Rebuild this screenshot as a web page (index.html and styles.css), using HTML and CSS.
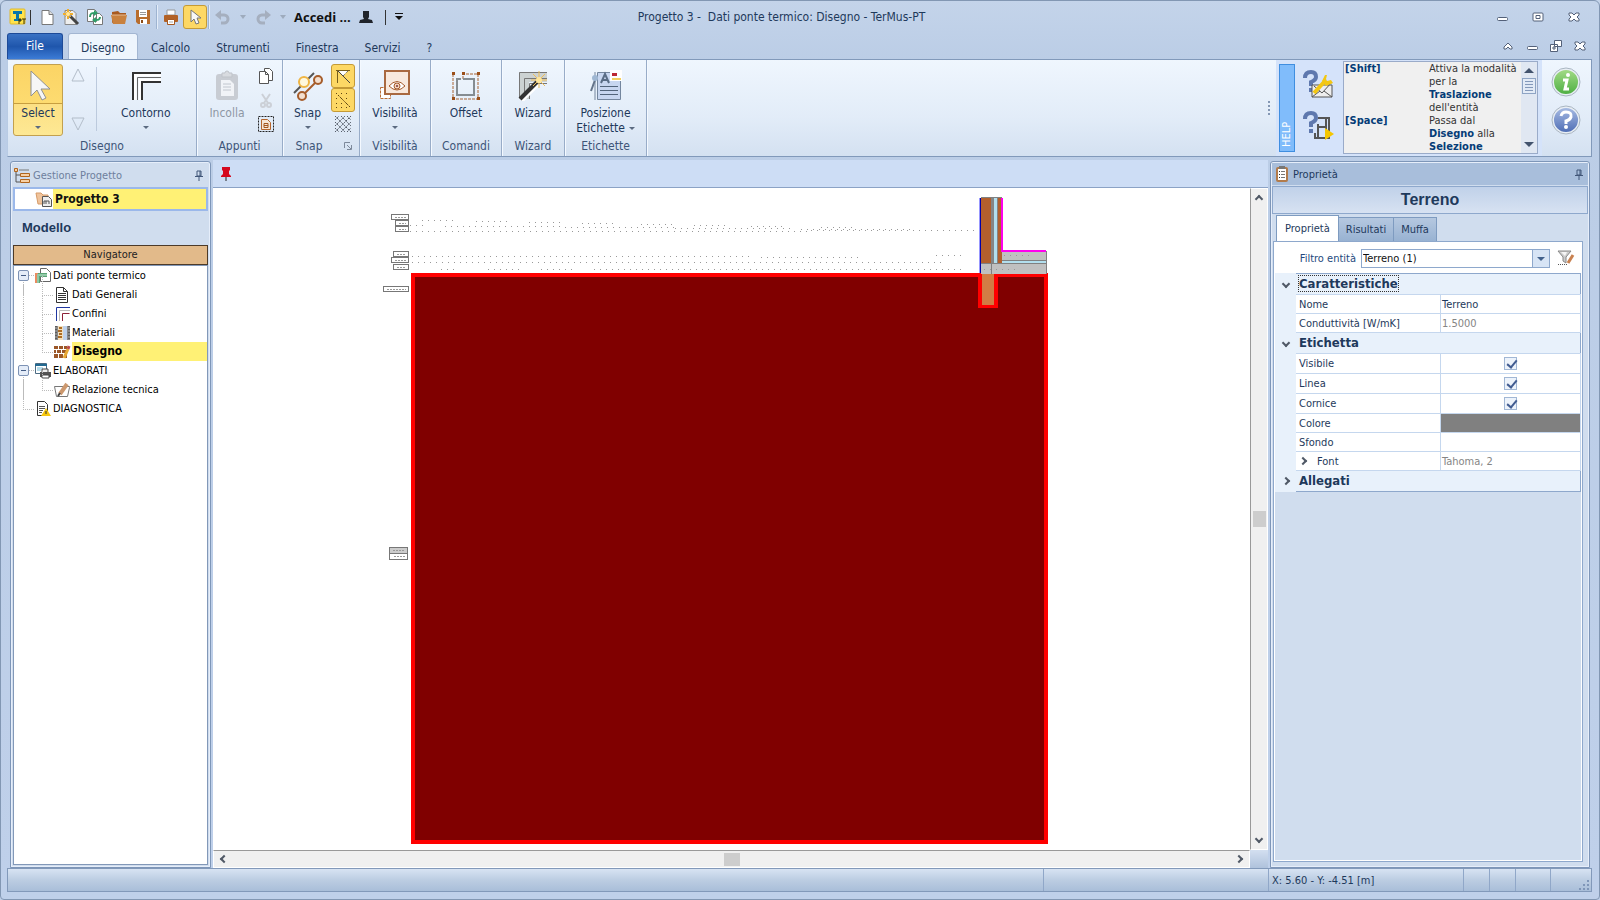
FILE: index.html
```html
<!DOCTYPE html>
<html lang="it">
<head>
  <meta charset="UTF-8">
  <meta name="viewport" content="width=device-width, initial-scale=1.0">
  <title>TerMus-PT</title>
  <link rel="stylesheet" href="styles.css">
</head>
<body>
  <header class="titlebar">
    <div class="quick">
      <svg class="logo" width="18" height="18" viewBox="0 0 18 18"><rect x="1" y="1" width="15" height="15" rx="1" fill="#ffe34d" stroke="#e0b92c"/><path d="M4 3h9v3h-3v5h2v2H5v-2h2V6H4z" fill="#0877a8"/><path d="M10 16v-5h2v2h-2M13 11h4M15 11v5" stroke="#3b3000" fill="none"/></svg>
      <span class="bar"></span>
      <button class="tool" aria-label="Nuovo"><svg width="18" height="18" viewBox="0 0 18 18"><path d="M4 2.500h7l4 4v10H4z" fill="#fff" stroke="#777"/><path d="M11 2.500v4h4" fill="#ddd" stroke="#777"/></svg></button>
      <button class="tool" aria-label="Wizard"><svg width="18" height="18" viewBox="0 0 18 18"><path d="M3 2.500h8l3 3v11H3z" fill="#eee" stroke="#888"/><path d="M8 8l8 8" stroke="#444" stroke-width="3"/><path d="M6 1v10M1 6h10" stroke="#f0ae2d" stroke-width="2"/><path d="M3 3l6 6M9 3L3 9" stroke="#f0ae2d"/><circle cx="6" cy="6" r="2" fill="#ffe9a0"/></svg></button>
      <button class="tool" aria-label="Duplica"><svg width="18" height="18" viewBox="0 0 18 18"><path d="M1.500 1.500h7l2 2v10h-9zM7.500 5.500h6l3 3v8h-9z" fill="#fff" stroke="#777"/><path d="M4 9c0-4 2-4 5-4" stroke="#2f9d69" stroke-width="2" fill="none"/><path d="M8 2l4 3-4 3z" fill="#2f9d69"/><path d="M14 9c0 3-2 3-5 3" stroke="#2f9d69" stroke-width="2" fill="none"/><path d="M10 9l-4 3 4 3z" fill="#2f9d69"/></svg></button>
      <button class="tool" aria-label="Apri"><svg width="18" height="18" viewBox="0 0 18 18"><path d="M2 15V4l6-1 2 2h6v3" fill="#a85a20"/><path d="M1 7h16l-2 9H3z" fill="#c9813e"/><path d="M2 7h14" stroke="#e5ba92"/></svg></button>
      <button class="tool" aria-label="Salva"><svg width="18" height="18" viewBox="0 0 18 18"><path d="M2 2h14v14H4l-2-2z" fill="#b86d2d"/><path d="M5 2h8v7H5zM6 11h7v5H6z" fill="#fff"/><path d="M6 4.500h6M6 6.500h6" stroke="#999"/><path d="M7 12h2v3H7z" fill="#8d4d19"/></svg></button>
      <span class="split"></span>
      <button class="tool" aria-label="Stampa"><svg width="18" height="18" viewBox="0 0 18 18"><path d="M5 2h8v5H5z" fill="#fff" stroke="#999"/><rect x="2" y="7" width="14" height="7" rx="1" fill="#b26125"/><path d="M5.500 11.500h7v5h-7z" fill="#fff" stroke="#a75a22"/><path d="M7 14h4" stroke="#aaa"/></svg></button>
      <button class="tool on" aria-label="Seleziona"><svg width="18" height="18" viewBox="0 0 18 18"><path d="M5 2v12l3-3 2 5 3-1-2-5h4z" fill="#f8f8f8" stroke="#777"/></svg></button>
      <span class="split"></span>
      <button class="tool" aria-label="Annulla"><svg width="18" height="18" viewBox="0 0 18 18"><path d="M4 7h6a4 4 0 010 8H7" fill="none" stroke="#a5afbf" stroke-width="3"/><path d="M7 2L1 7l6 5z" fill="#a5afbf"/></svg></button>
      <span class="mini"></span>
      <button class="tool" aria-label="Ripeti"><svg width="18" height="18" viewBox="0 0 18 18"><path d="M14 7H8a4 4 0 000 8h3" fill="none" stroke="#a5afbf" stroke-width="3"/><path d="M11 2l6 5-6 5z" fill="#a5afbf"/></svg></button>
      <span class="mini"></span>
      <button class="login">Accedi ...</button>
      <svg width="16" height="16" viewBox="0 0 16 16"><path d="M5 2h6v6l-1 2 4 1 1 3H1l1-3 4-1-1-2z" fill="#20242b"/></svg>
      <span class="bar"></span>
      <svg width="10" height="10" viewBox="0 0 10 10"><path d="M1 1.500h8" stroke="#111" stroke-width="1"/><path d="M1 4h8L5 8z" fill="#111"/></svg>
    </div>
    <div class="title">Progetto 3 -&nbsp; Dati ponte termico: Disegno - TerMus-PT</div>
    <div class="winbuttons">
      <button aria-label="Riduci"><svg width="12" height="12" viewBox="0 0 12 12"><rect x="1.500" y="6.500" width="10" height="3" rx="1" fill="#fff" stroke="#536079"/></svg></button>
      <button aria-label="Ingrandisci"><svg width="12" height="12" viewBox="0 0 12 12"><rect x="1" y="2" width="10" height="8" rx="1" fill="#fff" stroke="#536079"/><path d="M4 4.500h4v3H4z" fill="#fff" stroke="#536079"/></svg></button>
      <button aria-label="Chiudi"><svg width="12" height="12" viewBox="0 0 12 12"><path d="M1 2h3l2 2 2-2h3v2L9 6l2 2v2H8L6 8l-2 2H1V8l2-2-2-2z" fill="#fff" stroke="#536079"/></svg></button>
    </div>
  </header>

  <nav class="tabs">
    <button class="file">File</button>
    <a class="tab active" href="#">Disegno</a>
    <a class="tab" href="#">Calcolo</a>
    <a class="tab" href="#">Strumenti</a>
    <a class="tab" href="#">Finestra</a>
    <a class="tab" href="#">Servizi</a>
    <a class="tab" href="#">?</a>
    <div class="docbuttons">
      <button aria-label="Comprimi"><svg width="12" height="12" viewBox="0 0 12 12"><path d="M2 7l4-4 4 4v2H8L6 7 4 9H2z" fill="#fff" stroke="#536079"/></svg></button>
      <button aria-label="Riduci scheda"><svg width="12" height="12" viewBox="0 0 12 12"><rect x="1.500" y="6.500" width="10" height="3" rx="1" fill="#fff" stroke="#536079"/></svg></button>
      <button aria-label="Ripristina scheda"><svg width="12" height="12" viewBox="0 0 12 12"><path d="M4.500.5h7v6h-7zM.5 4.500h7v7h-7z" fill="#fff" stroke="#536079"/><path d="M3 7h2v2H3z" fill="none" stroke="#536079"/></svg></button>
      <button aria-label="Chiudi scheda"><svg width="12" height="12" viewBox="0 0 12 12"><path d="M1 2h3l2 2 2-2h3v2L9 6l2 2v2H8L6 8l-2 2H1V8l2-2-2-2z" fill="#fff" stroke="#536079"/></svg></button>
    </div>
  </nav>

  <section class="ribbon">
    <div class="group g-disegno">
      <div class="tools">
        <button class="big selected">
          <svg width="32" height="32" viewBox="0 0 32 32"><path d="M9 2v25l6-6 5 10 4-2-5-9h9z" fill="#f6f6f6" stroke="#909090"/></svg>
          <span class="cap">Select</span><i class="arrow"></i>
        </button>
        <div class="updown">
          <svg width="14" height="14" viewBox="0 0 14 14"><path d="M7 1l6 12H1z" fill="none" stroke="#b2bdc9"/></svg>
          <svg width="14" height="14" viewBox="0 0 14 14"><path d="M7 13L1 1h12z" fill="none" stroke="#b2bdc9"/></svg>
        </div>
        <span class="line"></span>
        <button class="big contorno">
          <svg width="32" height="32" viewBox="0 0 32 32"><path d="M5 31V6h26M10 31V11h21" fill="none" stroke="#fff" stroke-width="3"/><path d="M3 31V4h28" fill="none" stroke="#333" stroke-width="2"/><path d="M7.500 31V8.500H31" fill="none" stroke="#666"/><path d="M12 31V13h19" fill="none" stroke="#333" stroke-width="2"/></svg>
          <span class="cap">Contorno</span><i class="arrow"></i>
        </button>
      </div>
      <div class="name">Disegno</div>
    </div>
    <div class="group g-appunti">
      <div class="tools">
        <button class="big off">
          <svg width="32" height="32" viewBox="0 0 32 32"><rect x="5" y="5" width="22" height="26" rx="3" fill="#c8ccd3"/><path d="M11 8V4h3a2 2 0 014 0h3v4z" fill="#d8dbe0" stroke="#bfc3ca"/><path d="M10 11h9l4 4v12H10z" fill="#f1f3f7"/><path d="M12 15h8M12 18h8M12 21h8" stroke="#c1c6ce"/></svg>
          <span class="cap">Incolla</span>
        </button>
        <div class="stack">
          <button aria-label="Copia"><svg width="18" height="18" viewBox="0 0 18 18"><path d="M7.500 1.500h5l3 3v9h-8z" fill="#fff" stroke="#555"/><path d="M2.500 4.500h6l3 3v9h-9z" fill="#fff" stroke="#555"/><path d="M8.500 4.500v3h3" fill="none" stroke="#555"/></svg></button>
          <button aria-label="Taglia"><svg width="18" height="18" viewBox="0 0 18 18"><path d="M5 3l6 9M13 3l-6 9" stroke="#ccd0d7" stroke-width="2"/><circle cx="6" cy="14" r="2" fill="none" stroke="#ccd0d7" stroke-width="2"/><circle cx="12" cy="14" r="2" fill="none" stroke="#ccd0d7" stroke-width="2"/></svg></button>
          <button aria-label="Seleziona tutto"><svg width="18" height="18" viewBox="0 0 18 18"><rect x="1.500" y="1.500" width="15" height="15" fill="none" stroke="#222" stroke-dasharray="2 1"/><path d="M4.500 4.500h6l3 3v7h-9z" fill="#f7e5d5" stroke="#b5652c"/><path d="M7 8.500h4v4H7zM7 10.500h4" stroke="#a4561e" fill="none"/></svg></button>
        </div>
      </div>
      <div class="name">Appunti</div>
    </div>
    <div class="group g-snap">
      <div class="tools">
        <button class="big">
          <svg width="32" height="32" viewBox="0 0 32 32"><path d="M2 24L22 4" stroke="#555" stroke-width="2"/><path d="M10 27L26 11" stroke="#a65d2b" stroke-width="2"/><circle cx="12" cy="13" r="5" fill="#fff8dd" stroke="#efb544" stroke-width="2"/><circle cx="26" cy="11" r="4" fill="#f4dfce" stroke="#a65d2b" stroke-width="2"/><circle cx="10" cy="27" r="4" fill="#f4dfce" stroke="#a65d2b" stroke-width="2"/></svg>
          <span class="cap">Snap</span><i class="arrow"></i>
        </button>
        <div class="stack snaps">
          <button class="on" aria-label="Snap angolo"><svg width="18" height="18" viewBox="0 0 18 18"><path d="M2 3.500h14M3.500 3v13" fill="none" stroke="#775e1c"/><path d="M5 4h9l-5 5z" fill="#fff"/><path d="M4 4l12 12" stroke="#444"/><path d="M9 9l5-5" stroke="#444" stroke-dasharray="1 1"/></svg></button>
          <button class="on" aria-label="Snap griglia"><svg width="18" height="18" viewBox="0 0 18 18"><path d="M4 4l12 12" stroke="#624811" stroke-dasharray="2 1"/><path d="M2 2.500h15M2 7.500h15M2 12.500h15M2 16.500h15" stroke="#624811" stroke-dasharray="1 4"/></svg></button>
          <button aria-label="Griglia"><svg width="18" height="18" viewBox="0 0 18 18"><path d="M1 5l4-4M1 11L11 1M1 17L17 1M7 17L17 7M13 17l4-4M13 1l4 4M7 1l10 10M1 1l16 16M1 7l10 10M1 13l4 4" stroke="#555d69" stroke-dasharray="2 1"/></svg></button>
        </div>
      </div>
      <div class="name">Snap<svg class="launch" width="8" height="8" viewBox="0 0 8 8"><path d="M.5 6V.5H6M3 3l4 4M7.500 3v4.500H3" fill="none" stroke="#7d899a"/></svg></div>
    </div>
    <div class="group g-vis">
      <div class="tools">
        <button class="big">
          <svg width="32" height="32" viewBox="0 0 32 32"><path d="M1.500 18.500h10v11h-10z" fill="#fff" stroke="#b96d35" stroke-dasharray="3 1"/><path d="M6 2h24v23H6z" fill="#f8e9dd" stroke="#a96940" stroke-width="2"/><path d="M10 17q8-9 16 0-8 8-16 0z" fill="#fff" stroke="#a65b2b"/><circle cx="18" cy="17" r="3" fill="#f3d3bc" stroke="#a65b2b"/><circle cx="18" cy="17" r="1" fill="#733"/></svg>
          <span class="cap">Visibilità</span><i class="arrow"></i>
        </button>
      </div>
      <div class="name">Visibilità</div>
    </div>
    <div class="group g-cmd">
      <div class="tools">
        <button class="big">
          <svg width="32" height="32" viewBox="0 0 32 32"><path d="M3 5v25h25V5H13v5" fill="none" stroke="#a96434" stroke-width="1" stroke-dasharray="3 1"/><path d="M11 10H7v16h17V10H13" fill="none" stroke="#858c91" stroke-width="2"/><path d="M2 3h3v3H2zM12 3h3v3h-3zM27 3h3v3h-3zM2 28h3v3H2zM27 28h3v3h-3z" fill="#9b4f19"/></svg>
          <span class="cap">Offset</span>
        </button>
      </div>
      <div class="name">Comandi</div>
    </div>
    <div class="group g-wiz">
      <div class="tools">
        <button class="big">
          <svg width="32" height="32" viewBox="0 0 32 32"><path d="M2 30V3h28v10H12v17z" fill="#ccd2d2"/><path d="M2.500 30V3.500H30M7.500 30V9.500H30M12.500 30V14.500H30" fill="none" stroke="#777"/><path d="M4 31l16-16" stroke="#fff" stroke-width="6"/><path d="M3 30l17-17" stroke="#333" stroke-width="4"/><path d="M22 2v17M14 11h16M16 5l12 12M28 5L16 17" stroke="#efbd57"/><circle cx="22" cy="11" r="3" fill="#ffe69b"/></svg>
          <span class="cap">Wizard</span>
        </button>
      </div>
      <div class="name">Wizard</div>
    </div>
    <div class="group g-etic">
      <div class="tools">
        <button class="big">
          <svg width="32" height="32" viewBox="0 0 32 32"><path d="M7.500 3.500h23v27h-23z" fill="#c7d6f0" stroke="#74869e"/><path d="M5 3v28" stroke="#74869e"/><path d="M5 11L1 22" stroke="#64748a" stroke-width="2"/><circle cx="5" cy="9" r="3" fill="#9fb7d3"/><path d="M11 14l4-9 4 9M12.500 11h5" stroke="#596c85" stroke-width="2" fill="none"/><path d="M10 17.500h18M10 21.500h18M10 25.500h18" stroke="#52647b"/><path d="M20 1h12v11H20z" fill="#fff"/><path d="M22 4h5v3h-5z" fill="#bc2832"/><path d="M22 9h9v2h-9z" fill="#f3d161"/></svg>
          <span class="cap">Posizione</span><span class="cap">Etichette <i class="arrow"></i></span>
        </button>
      </div>
      <div class="name">Etichette</div>
    </div>

    <div class="grip"></div>
    <aside class="help">
      <div class="helpbar">HELP</div>
      <div class="helpicons">
        <svg width="32" height="30" viewBox="0 0 32 30"><path d="M3 9q0-6 6-6 5 0 5 5 0 3-5 5v4" fill="none" stroke="#5e78ae" stroke-width="4"/><path d="M7 19h4v4H7z" fill="#5e78ae"/><path d="M10 16h20v12H10z" fill="#eee" stroke="#555"/><path d="M10 28l8-6M30 28l-8-6M12 17l8 7 10-11" stroke="#555" fill="none"/><path d="M12 24L23 12" stroke="#f3c713" stroke-width="4"/><path d="M23 6l-3 6 4 5 7-3-2-3-4 1-1-2 1-4z" fill="#f3c713"/></svg>
        <svg width="32" height="30" viewBox="0 0 32 30"><path d="M3 9q0-6 6-6 5 0 5 5 0 3-5 5v4" fill="none" stroke="#5e78ae" stroke-width="4"/><path d="M7 19h4v4H7z" fill="#5e78ae"/><path d="M16 8h11v20H13v-5M24 8v20M16 14v14M16 17h8" fill="none" stroke="#555" stroke-width="2"/><path d="M23 18l9 6-9 6z" fill="#f5c600"/></svg>
      </div>
      <div class="helpbox">
        <dl class="keys">
          <dt>[Shift]</dt><dd>Attiva la modalità per la <b>Traslazione</b> dell'entità</dd>
          <dt>[Space]</dt><dd>Passa dal <b>Disegno</b> alla <b>Selezione</b></dd>
        </dl>
        <div class="helpscroll"><i class="up"></i><i class="thumb"></i><i class="down"></i></div>
      </div>
    </aside>
    <div class="about">
      <button aria-label="Informazioni"><svg width="30" height="30" viewBox="0 0 30 30"><defs><linearGradient id="gg" x2="0" y2="1"><stop stop-color="#a5dc88"/><stop offset="1" stop-color="#4cae42"/></linearGradient><linearGradient id="gb" x2="0" y2="1"><stop stop-color="#a9bde4"/><stop offset="1" stop-color="#4d6cb4"/></linearGradient></defs><circle cx="15" cy="15" r="13" fill="url(#gg)" stroke="#e8eef4" stroke-width="2"/><circle cx="15" cy="15" r="14" fill="none" stroke="#a9b5c1"/><circle cx="17" cy="8" r="2" fill="#fff"/><path d="M12 13h4l-2 9h4" fill="none" stroke="#fff" stroke-width="3"/></svg></button>
      <button aria-label="Guida"><svg width="30" height="30" viewBox="0 0 30 30"><circle cx="15" cy="15" r="13" fill="url(#gb)" stroke="#e8eef4" stroke-width="2"/><circle cx="15" cy="15" r="14" fill="none" stroke="#a9b5c1"/><path d="M10 11q1-4 5-4 6 0 5 5-1 3-5 4v3" fill="none" stroke="#fff" stroke-width="3"/><circle cx="15" cy="22" r="2" fill="#fff"/></svg></button>
    </div>
  </section>

  <main class="work">
    <aside class="project">
      <div class="head">
        <svg width="18" height="18" viewBox="0 0 18 18"><path d="M3 4v11h4M3 8h4" fill="none" stroke="#555"/><path d="M1.500 1.500h3v3h-3zM7.500 6.500h9v3h-9zM7.500 12.500h9v3h-9z" fill="#f7d0a5" stroke="#b0651e"/><path d="M6 3h10" stroke="#777"/></svg>
        <span>Gestione Progetto</span>
        <svg class="pin" width="8" height="11" viewBox="0 0 8 11"><path d="M2 1h4v5H2zM0 6.500h8M4 7v4M5 1v5" fill="none" stroke="#415678"/></svg>
      </div>
      <div class="root">
        <svg width="18" height="16" viewBox="0 0 18 16"><path d="M1 2h5l2 2h5v9H3z" fill="#efc39b" stroke="#d79b68"/><path d="M7.500 5.500h6l3 3v7h-9z" fill="#eee" stroke="#555"/><path d="M9 13v-3h5v3M11 10v3" fill="none" stroke="#555"/></svg>
        <b>Progetto 3</b>
      </div>
      <h2>Modello</h2>
      <div class="navtitle">Navigatore</div>
      <ul class="tree">
        <li><i class="box"></i>
          <svg width="18" height="16" viewBox="0 0 18 16"><path d="M6.500.5h6l4 4v9h-10z" fill="#fff" stroke="#666"/><path d="M1 15V5h12v4H6v6z" fill="#5ba375"/><path d="M1 15V5h3v10z" fill="#e98b60"/><path d="M4 15V7h9" fill="none" stroke="#91c9a7" stroke-width="2"/></svg><span>Dati ponte termico</span></li>
        <li class="sub"><svg width="18" height="16" viewBox="0 0 18 16"><path d="M3.500.5h7l4 4v11h-11z" fill="#fff" stroke="#333"/><path d="M10.500.5v4h4M5 6.500h8M5 8.500h8M5 10.500h8M5 12.500h8" fill="none" stroke="#333"/></svg><span>Dati Generali</span></li>
        <li class="sub"><svg width="18" height="16" viewBox="0 0 18 16"><path d="M3.500 15V1.500H17" fill="none" stroke="#1f36a0"/><path d="M6.500 15V4.500H17" fill="none" stroke="#bbb"/><path d="M9.500 15V7.500h7" fill="none" stroke="#8d2138"/></svg><span>Confini</span></li>
        <li class="sub"><svg width="18" height="16" viewBox="0 0 18 16"><path d="M2 1h15v14H2z" fill="#888"/><path d="M5 1h5v14H5z" fill="#f3dfbd"/><path d="M10 1h4v14h-4z" fill="#bdd0ea"/><path d="M6 3h3M5 6h4M6 9h3M5 12h4" stroke="#ad6c23" stroke-width="2"/><path d="M3 1v14M16 1v14" stroke="#333" stroke-dasharray="1 2"/></svg><span>Materiali</span></li>
        <li class="sub current"><svg width="18" height="16" viewBox="0 0 18 16"><path d="M1 2h13v12H1z" fill="#9b5728"/><path d="M1 5.500h13M1 9.500h13M5.500 2v4M10.500 2v4M3.500 6v4M8.500 6v4M5.500 10v4M10.500 10v4" stroke="#fff"/><path d="M11 14l4-9" stroke="#e7a936" stroke-width="3"/><path d="M15 5l1-3" stroke="#bc4c4b" stroke-width="3"/></svg><span>Disegno</span></li>
        <li><i class="box"></i><svg width="18" height="16" viewBox="0 0 18 16"><path d="M1.500.5h11v10h-11z" fill="#fff" stroke="#4b6b83"/><path d="M1 1h12v2H1z" fill="#226991"/><path d="M3 5h6M3 7h4" stroke="#6ab8d5"/><path d="M8 6h6v4H8z" fill="#eee" stroke="#444"/><path d="M6 9h11v5H6z" fill="#555"/><path d="M8 12h7v3H8z" fill="#fff" stroke="#444"/></svg><span>ELABORATI</span></li>
        <li class="sub"><svg width="18" height="16" viewBox="0 0 18 16"><path d="M1.500 4.500h15v1l-2 9h-11z" fill="#fff" stroke="#777"/><path d="M7 12l7-10" stroke="#cc986e" stroke-width="4"/><path d="M7 11l-2 3" stroke="#444" stroke-width="2"/></svg><span>Relazione tecnica</span></li>
        <li class="leaf"><svg width="18" height="16" viewBox="0 0 18 16"><path d="M3.500.5h7l3 3v11h-10z" fill="#fff" stroke="#333"/><path d="M5 5.500h6M5 7.500h6M5 9.500h4M5 11.500h3" stroke="#555"/><path d="M12 7l5 8H7z" fill="#f7c70d"/><path d="M12 10v3" stroke="#333"/></svg><span>DIAGNOSTICA</span></li>
      </ul>
    </aside>

    <section class="document">
      <div class="docbar"><svg width="12" height="16" viewBox="0 0 12 16"><path d="M2 1h8v3L9 5v3l2 2v1H1v-1l2-2V5L2 4z" fill="#d5081e"/><path d="M6 11v4" stroke="#222"/></svg></div>
      <div class="canvas">
        <svg width="100%" height="100%" viewBox="212 188 1038 662" preserveAspectRatio="xMinYMin slice" shape-rendering="crispEdges">
          <path d="M412 275h567v31h16v-31h50v567H412z" fill="#800000" stroke="#f00" stroke-width="4"/>
          <path d="M981 274h12v31h-12z" fill="#d27c44"/>
          <path d="M980 198h21v66h-21z" fill="#b35f2c"/>
          <path d="M990 198h7v66h-7z" fill="#858585"/>
          <path d="M993 198h3v66h-3z" fill="#b2dfee"/>
          <path d="M1001 251h44v23h-44zM980 263h65v11h-65z" fill="#c0c0c0"/>
          <path d="M1001 260h44v3h-44z" fill="#b2dfee"/>
          <path d="M980 197.500h21M980 263.500h65M1001 260.500h44M990.500 264v10M1045.500 251v23" stroke="#808080"/>
          <path d="M979.500 198v75" stroke="#0000a8"/>
          <path d="M978.500 198v75" stroke="#9797ff"/>
          <path d="M1001 198v53h44" fill="none" stroke="#f0e" stroke-width="2"/>
          <g fill="#fff" stroke="#777">
            <path d="M390.500 214.500h17v5h-17zM394.500 220.500h13v5h-13zM394.500 226.500h13v5h-13zM392.500 251.500h15v5h-15zM390.500 257.500h17v5h-17zM392.500 264.500h15v5h-15zM382.500 286.500h25v5h-25z"/>
            <path d="M388.500 547.500h18v6h-18z" fill="#ccc"/><path d="M388.500 553.500h18v6h-18z"/>
          </g>
          <path d="M394 217.500h11M398 223.500h7M398 229.500h7M396 254.500h9M394 260.500h11M396 267.500h9M386 289.500h19M392 550.500h12M393 556.500h11" stroke="#999" stroke-dasharray="2 1"/>
          <g stroke="#999" stroke-dasharray="1 5">
            <path d="M421 220.500h32M475 221.500h36M528 222.500h36M581 223.500h36M640 224.500h36M693 225.500h36M750 226.500h36M820 227.500h36"/>
            <path d="M409 225.500h14M444 226.500h120M564 227.500h110M674 228.500h120M800 229.500h114"/>
            <path d="M409 231.500h400M810 230.500h168M411 256.500h340M760 257.500h100M935 255.500h25M411 262.500h530M440 269.500h18M487 269.500h31M540 269.500h36M593 269.500h367M1003 255.500h25M983 269.500h34"/>
          </g>
        </svg>
      </div>
      <div class="vscroll"><i class="chev n"></i><i class="thumb"></i><i class="chev s"></i></div>
      <div class="hscroll"><i class="chev w"></i><i class="thumb"></i><i class="chev e"></i></div>
      <div class="corner"></div>
    </section>

    <aside class="props">
      <div class="head">
        <svg width="18" height="18" viewBox="0 0 18 18"><rect x="3" y="2" width="12" height="15" rx="2" fill="#b27b4b"/><path d="M5 4h8v11H5z" fill="#fff"/><path d="M6 1h6v3H6z" fill="#777"/><path d="M8 6.500h4M8 9.500h4M8 12.500h4" stroke="#777"/><path d="M6 6.500h1M6 9.500h1M6 12.500h1" stroke="#333"/></svg>
        <span>Proprietà</span>
        <svg class="pin" width="8" height="11" viewBox="0 0 8 11"><path d="M2 1h4v5H2zM0 6.500h8M4 7v4M5 1v5" fill="none" stroke="#415678"/></svg>
      </div>
      <h1>Terreno</h1>
      <div class="ptabs">
        <button class="active">Proprietà</button><button>Risultati</button><button>Muffa</button>
      </div>
      <div class="sheet">
        <div class="filter">
          <label for="filtro">Filtro entità</label>
          <span class="combo"><select id="filtro"><option>Terreno (1)</option></select></span>
          <button aria-label="Filtra"><svg width="18" height="18" viewBox="0 0 18 18"><path d="M1 2h13l-5 6v6l-3-2V8z" fill="#ccc" stroke="#888"/><path d="M4 3h6l-2 4z" fill="#f5f5f5"/><path d="M11 14l5-8" stroke="#c98150" stroke-width="3"/><path d="M1 15.500h9" stroke="#555" stroke-dasharray="1 1"/></svg></button>
        </div>
        <table class="grid">
          <colgroup><col class="c-exp"><col class="c-name"><col></colgroup>
          <tr class="cat"><td><i class="chev s"></i></td><th colspan="2"><span class="focus">Caratteristiche</span></th></tr>
          <tr><td></td><td>Nome</td><td>Terreno</td></tr>
          <tr><td></td><td>Conduttività [W/mK]</td><td class="ro">1.5000</td></tr>
          <tr class="cat"><td><i class="chev s"></i></td><th colspan="2">Etichetta</th></tr>
          <tr class="tick"><td></td><td><label for="visibile">Visibile</label></td><td><input type="checkbox" id="visibile" checked></td></tr>
          <tr class="tick"><td></td><td><label for="linea">Linea</label></td><td><input type="checkbox" id="linea" checked></td></tr>
          <tr class="tick"><td></td><td><label for="cornice">Cornice</label></td><td><input type="checkbox" id="cornice" checked></td></tr>
          <tr><td></td><td>Colore</td><td class="gray"></td></tr>
          <tr><td></td><td>Sfondo</td><td></td></tr>
          <tr><td></td><td><i class="chev e"></i><span class="nested">Font</span></td><td class="ro">Tahoma, 2</td></tr>
          <tr class="cat"><td><i class="chev e"></i></td><th colspan="2">Allegati</th></tr>
        </table>
      </div>
    </aside>
  </main>

  <footer class="status">
    <span class="s-main"></span><span class="s-mid"></span><span class="s-pos">X: 5.60 - Y: -4.51 [m]</span><span class="s-a"></span><span class="s-a"></span><span class="s-b"></span>
    <span class="s-grip"><svg width="12" height="12" viewBox="0 0 12 12"><path d="M8 1h2v2H8zM4 5h2v2H4zM8 5h2v2H8zM0 9h2v2H0zM4 9h2v2H4zM8 9h2v2H8z" fill="#7f96b8"/></svg></span>
  </footer>
</body>
</html>
```
FILE: styles.css
```css
* {
  box-sizing: border-box;
}
body {
  margin: 0;
  height: 100vh;
  display: flex;
  flex-direction: column;
  padding: 0 7px 7px 6px;
  border: 1px solid #8297b3;
  border-radius: 6px 6px 4px 4px;
  background: linear-gradient(#c4d4ea, #bbcde6 60px, #bfd0ea);
  font: 11px/13px "DejaVu Sans Condensed", "DejaVu Sans", sans-serif;
  color: #1e395b;
  overflow: hidden;
}
button {
  font: inherit;
  color: inherit;
  background: none;
  border: 0;
  padding: 0;
}
svg {
  display: block;
  flex: none;
}
i {
  display: block;
  font-style: normal;
}

/* title bar */
.titlebar {
  position: relative;
  height: 32px;
  display: flex;
  align-items: center;
  justify-content: space-between;
}
.quick {
  display: flex;
  align-items: center;
}
.logo {
  margin: 0 3px 0 2px;
}
.bar {
  width: 1px;
  height: 15px;
  background: #333;
  margin-right: 4px;
}
.tool {
  width: 24px;
  height: 24px;
  display: flex;
  align-items: center;
  justify-content: center;
}
.tool.on {
  border: 1px solid #c49a36;
  border-radius: 3px;
  background: #fdd865;
}
.split {
  width: 2px;
  height: 24px;
  margin: 0 1px;
  border-left: 1px solid #9eb4d1;
  background: #e4edf9;
}
.mini {
  border: 3px solid transparent;
  border-top: 4px solid #9eabbd;
  border-bottom: 0;
  margin: 0 5px;
}
.login {
  font: bold 13px/16px "Open Sans", sans-serif;
  color: #111;
  margin: 0 7px 0 3px;
}
.login + svg {
  margin-right: 11px;
}
.quick .bar:nth-last-child(2) {
  margin-right: 8px;
}
.title {
  position: absolute;
  left: 0;
  right: 36px;
  text-align: center;
  font-size: 12px;
  pointer-events: none;
}
.winbuttons {
  display: flex;
  gap: 24px;
  padding-right: 12px;
}

/* tabs */
.tabs {
  height: 26px;
  display: flex;
  align-items: stretch;
  font-size: 12px;
}
.file {
  width: 56px;
  margin-right: 5px;
  border: 1px solid #1d4a98;
  border-bottom: 0;
  border-radius: 3px 3px 0 0;
  color: #fff;
  background: linear-gradient(#3a72c4, #1f56ac 50%, #3b7bd6);
}
.tab {
  display: flex;
  align-items: center;
  padding: 5px 13px 0;
  color: #1e395b;
  text-decoration: none;
}
.tab.active {
  border: 1px solid #a3b6d2;
  border-bottom: 0;
  border-radius: 3px 3px 0 0;
  background: #eef5fd;
  padding: 4px 12px 0;
}
.docbuttons {
  display: flex;
  align-items: center;
  gap: 12px;
  margin-left: auto;
  padding-right: 6px;
}

/* ribbon */
.ribbon {
  height: 98px;
  flex: none;
  display: flex;
  border: 1px solid #8199ba;
  border-left-color: #b8cbe4;
  background: linear-gradient(#eff6fe, #e2ecf8 60%, #d4e1f1);
}
.group {
  display: flex;
  flex-direction: column;
  border-right: 1px solid #98acc8;
  box-shadow: 1px 0 #f4f9ff;
}
.g-disegno { width: 189px; }
.g-appunti { width: 86px; }
.g-snap { width: 77px; }
.g-vis { width: 71px; }
.g-cmd { width: 71px; }
.g-wiz { width: 63px; }
.g-etic { width: 82px; }
.tools {
  flex: 1;
  display: flex;
  justify-content: center;
  padding-top: 4px;
}
.name {
  position: relative;
  height: 20px;
  line-height: 20px;
  text-align: center;
  font-size: 12px;
  color: #3d5578;
}
.g-disegno .tools,
.g-appunti .tools,
.g-snap .tools {
  justify-content: flex-start;
  padding-left: 5px;
}
.g-snap .name {
  padding-right: 24px;
}
.launch {
  position: absolute;
  right: 7px;
  top: 6px;
}
.big {
  height: 72px;
  display: flex;
  flex-direction: column;
  align-items: center;
  padding-top: 5px;
  font-size: 12px;
}
.cap {
  display: flex;
  align-items: center;
  gap: 4px;
  line-height: 15px;
}
.big svg {
  margin-bottom: 5px;
}
.arrow {
  border: 3px solid transparent;
  border-top: 3px solid #5b6a80;
  border-bottom: 0;
}
.big > .arrow {
  margin-top: 5px;
}
.selected {
  width: 50px;
  border: 1px solid #c2a04f;
  border-radius: 3px;
  padding-top: 4px;
  background: linear-gradient(#fbd465, #fddb70 38px, #c79e3f 38px, #c79e3f 39px, #fce084 39px, #fde894);
}
.updown {
  width: 30px;
  display: flex;
  flex-direction: column;
  justify-content: space-between;
  align-items: center;
  padding: 4px 0 5px;
}
.line {
  width: 1px;
  height: 64px;
  margin: 3px 24px 0 3px;
  background: #bccadd;
}
.off {
  width: 50px;
  color: #8e97a5;
}
.stack {
  display: flex;
  flex-direction: column;
  margin-left: 2px;
}
.stack button {
  width: 24px;
  height: 24px;
  display: flex;
  align-items: center;
  justify-content: center;
}
.snaps {
  margin-left: 4px;
}
.stack .on {
  border: 1px solid #c49a36;
  border-radius: 3px;
  background: #fdd865;
}
.g-snap .big {
  width: 39px;
}
.grip {
  width: 2px;
  height: 15px;
  margin: 41px 6px 0 auto;
  background: repeating-linear-gradient(#8497b4 0 2px, transparent 2px 4px);
}
.help {
  display: flex;
  padding: 1px 4px 2px 3px;
  background: #d5e3fa;
}
.helpbar {
  width: 16px;
  height: 88px;
  margin-top: 3px;
  padding: 4px 0;
  border: 1px solid #3f8ee0;
  background: #80bcfb;
  color: #fff;
  line-height: 14px;
  writing-mode: vertical-rl;
  transform: rotate(180deg);
}
.helpicons {
  width: 48px;
  display: flex;
  flex-direction: column;
  gap: 11px;
  padding: 8px 9px 8px 7px;
}
.helpbox {
  width: 195px;
  height: 93px;
  display: flex;
  border: 1px solid #9aabc9;
  background: #f0f0f0;
}
.keys {
  flex: 1;
  margin: 0;
  padding-left: 1px;
  display: grid;
  grid-template-columns: 84px 1fr;
  align-content: start;
  color: #333;
}
.keys dt,
.keys b {
  font-weight: bold;
  color: #053c77;
}
.keys dd {
  margin: 0;
}
.helpscroll {
  width: 16px;
  display: flex;
  flex-direction: column;
  align-items: center;
  background: #e0e7f2;
}
.up,
.down {
  border: 5px solid transparent;
}
.up {
  border-bottom-color: #42536d;
  border-top: 0;
  margin: 6px 0 5px;
}
.down {
  border-top-color: #42536d;
  border-bottom: 0;
  margin: auto 0 6px;
}
.helpscroll .thumb {
  width: 14px;
  height: 16px;
  border: 1px solid #8ea4c4;
  background: repeating-linear-gradient(#dfe8f5 0 2px, #8499ba 2px 3px);
  box-shadow: inset 0 0 0 2px #e3ebf6;
}
.about {
  width: 49px;
  display: flex;
  flex-direction: column;
  align-items: center;
  gap: 8px;
  padding: 7px 2px 0 0;
}

/* work area */
.work {
  flex: 1;
  min-height: 0;
  display: flex;
  gap: 2px;
  padding-top: 3px;
}
.project,
.props {
  display: flex;
  flex-direction: column;
  margin-top: 1px;
  border: 1px solid #7e96b8;
  border-radius: 3px 3px 0 0;
  background: #d0ddee;
  box-shadow: inset 0 0 0 1px #e6eefa;
}
.project {
  width: 201px;
  margin-left: 3px;
  padding: 2px;
}
.head {
  height: 23px;
  display: flex;
  align-items: center;
  gap: 2px;
}
.head .pin {
  margin: 0 5px 0 auto;
}
.project .head {
  color: #6e7f9d;
}
.root {
  height: 24px;
  display: flex;
  align-items: center;
  border: 2px solid #9bb8ea;
  background: #fff;
  color: #111;
  padding-left: 20px;
}
.root b {
  flex: 1;
  line-height: 20px;
  padding-left: 2px;
  background: #fff175;
  font-size: 12px;
}
.project h2 {
  margin: 0;
  padding: 8px 9px;
  font: bold 13px/18px "Liberation Sans", sans-serif;
}
.navtitle {
  height: 20px;
  line-height: 18px;
  text-align: center;
  border: 1px solid #4c3a28;
  background: #e2ba8a;
  color: #222;
}
.tree {
  flex: 1;
  margin: 0;
  padding: 0;
  list-style: none;
  border: 1px solid #8298b8;
  background: #fff;
  color: #000;
}
.tree li {
  position: relative;
  height: 19px;
  display: flex;
  align-items: center;
  gap: 1px;
  padding-left: 4px;
}
.tree span {
  flex: 1;
  line-height: 19px;
}
.box {
  position: relative;
  z-index: 1;
  width: 11px;
  height: 11px;
  margin-right: 4px;
  border: 1px solid #7d92b5;
  border-radius: 2px;
  background: linear-gradient(#425b84, #425b84) center / 5px 1px no-repeat, #e4ecf8;
}
.tree .sub {
  padding-left: 39px;
}
.tree .leaf {
  padding-left: 20px;
}
/* dotted branches of the tree */
.tree li::before {
  content: "";
  position: absolute;
  left: 9px;
  top: 9px;
  width: 10px;
  height: 19px;
  border: 1px dotted #bbb;
  border-width: 1px 0 0 1px;
}
.tree .sub::before {
  left: 28px;
  top: -9px;
  border-width: 0 0 1px 1px;
}
.tree .leaf::before {
  top: -9px;
  border-width: 0 0 1px 1px;
}
.tree .sub::after {
  content: "";
  position: absolute;
  left: 9px;
  top: 0;
  height: 19px;
  border-left: 1px dotted #bbb;
}
.tree .current span {
  padding-left: 1px;
  background: #fff175;
  font-weight: bold;
  font-size: 12px;
}

/* drawing */
.document {
  flex: 1;
  min-width: 0;
  display: grid;
  grid-template-columns: 1fr 18px;
  grid-template-rows: 28px 1fr 18px;
}
.docbar {
  grid-column: 1 / 3;
  padding: 6px 7px;
  background: #cdddf5;
  border-bottom: 1px solid #8ba2c5;
}
.canvas {
  min-height: 0;
  overflow: hidden;
  background: #fff;
}
.vscroll,
.hscroll {
  display: flex;
  align-items: center;
  justify-content: space-between;
  background: #f0f0f0;
  border: 1px solid #fff;
}
.vscroll {
  flex-direction: column;
  padding: 7px 0;
  border-left-color: #999;
}
.hscroll {
  padding: 0 7px;
  border-top-color: #999;
}
.vscroll .thumb,
.hscroll .thumb {
  width: 16px;
  height: 16px;
  background: #cdcdcd;
}
.vscroll .thumb {
  width: 13px;
}
.hscroll .thumb {
  height: 13px;
}
.corner {
  background: linear-gradient(#d3dff0, #afc2dc);
}
.chev {
  width: 6px;
  height: 6px;
  border: solid #505966;
  border-width: 2px 2px 0 0;
}
.chev.n { transform: rotate(-45deg); }
.chev.e { transform: rotate(45deg); }
.chev.s { transform: rotate(135deg); }
.chev.w { transform: rotate(225deg); }

/* properties */
.props {
  width: 320px;
  margin-right: 2px;
  padding: 1px;
}
.props .head {
  height: 22px;
  background: #a8bedb;
  padding-left: 1px;
}
.props h1 {
  height: 28px;
  margin: 1px 0;
  border: 1px solid #8ea8cc;
  text-align: center;
  font: bold 16px/26px "Liberation Sans", sans-serif;
  background: linear-gradient(#c0d1e9, #d7e2f2);
}
.ptabs {
  display: flex;
  align-items: flex-end;
  padding-left: 4px;
}
.ptabs button {
  height: 24px;
  padding: 0 7px;
  border: 1px solid #7e9bc0;
  border-bottom: 0;
  background: linear-gradient(#b5c8e0, #98b2d2);
}
.ptabs button + button {
  border-left: 0;
}
.ptabs .active {
  height: 26px;
  padding: 0 8px;
  background: #fff;
}
.sheet {
  flex: 1;
  margin: 0 5px 4px 1px;
  border: 1px solid #8ea8cc;
  box-shadow: inset 0 0 0 1px #fff;
  padding: 1px;
}
.filter {
  display: flex;
  align-items: center;
  justify-content: flex-end;
  gap: 5px;
  height: 30px;
  padding-right: 6px;
  background: #fff;
}
.filter label {
  color: #24497d;
}
.combo {
  position: relative;
  width: 189px;
  height: 19px;
}
.combo select {
  width: 100%;
  height: 19px;
  appearance: none;
  border: 1px solid #8ea8cc;
  border-radius: 0;
  padding: 0 1px;
  background: linear-gradient(#8ea8cc, #8ea8cc) right 16px top / 1px 100% no-repeat, linear-gradient(#d7e4f5, #d7e4f5) right / 16px 100% no-repeat, #fff;
  font: inherit;
  color: #111;
}
.combo::after {
  content: "";
  position: absolute;
  right: 5px;
  top: 8px;
  border: 4px solid transparent;
  border-top-color: #42618c;
  border-bottom: 0;
}
.filter button {
  margin-left: 2px;
}
.grid {
  width: 100%;
  table-layout: fixed;
  border-collapse: collapse;
  border: 1px solid #8ea8cc;
  background: #fff;
}
.c-exp { width: 20px; }
.c-name { width: 145px; }
.grid td {
  height: 19px;
  padding: 0 2px 0 3px;
  border: 1px solid #c5d7ee;
}
.grid td:first-child,
.grid .cat th {
  background: #e8f1fb;
  border-color: #e8f1fb;
}
.grid td:nth-child(3) {
  padding-left: 1px;
}
.grid td:nth-child(2) {
  border-left-color: #c5d7ee;
}
.grid .cat th {
  height: 21px;
  padding: 0 3px;
  text-align: left;
  font-size: 13px;
  line-height: 16px;
}
.grid td:first-child .chev {
  margin-left: 4px;
}
.grid td:nth-child(2) .chev {
  display: inline-block;
  margin: 0 11px 1px 1px;
}
.grid .tick td {
  height: 20px;
}
.tick td:last-child {
  text-align: center;
}
.focus {
  outline: 1px dotted #333;
}
.ro {
  color: #858585;
}
.gray {
  background: #808080;
}
.tick input {
  appearance: none;
  display: inline-block;
  vertical-align: middle;
  width: 13px;
  height: 13px;
  margin: 0;
  border: 1px solid #a1b7d5;
  background: #edf3fb;
}
.tick input:checked::after {
  content: "";
  display: block;
  width: 4px;
  height: 8px;
  margin: 0 0 0 4px;
  border: solid #415c91;
  border-width: 0 2px 2px 0;
  transform: rotate(40deg);
}

/* status bar */
.status {
  height: 24px;
  flex: none;
  display: flex;
  border: 1px solid #8299ba;
  background: linear-gradient(#d7e3f3, #bccde2 50%, #a9bed9);
}
.status span {
  border-right: 1px solid #90a7c8;
  line-height: 24px;
}
.s-main { flex: 1; }
.s-mid { width: 225px; }
.s-pos { width: 195px; padding-left: 3px; }
.s-a { width: 26px; }
.s-b { width: 35px; }
.status .s-grip {
  width: 40px;
  border: 0;
  display: flex;
  align-items: flex-end;
  justify-content: flex-end;
}
```
